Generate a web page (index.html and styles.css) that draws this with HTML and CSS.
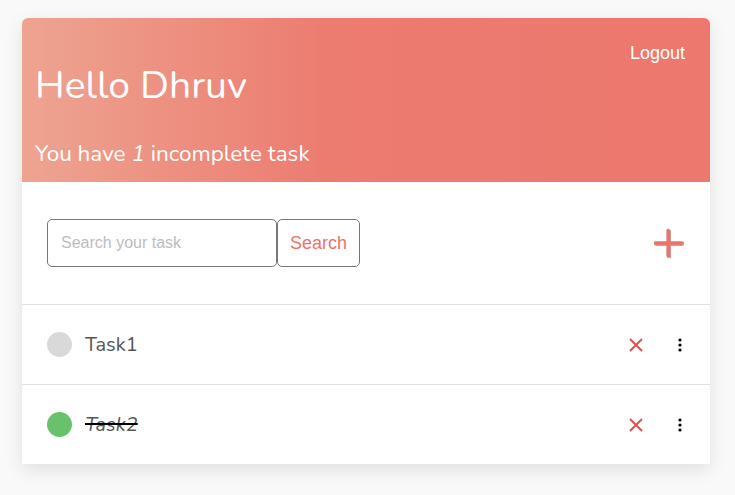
FILE: index.html
```html
<!DOCTYPE html>
<html>
<head>
<meta charset="utf-8">
<link rel="stylesheet" href="styles.css">
</head>
<body>
<div class="card">
  <header class="hero">
    <a class="logout" href="#">Logout</a>
    <h1 class="hello">Hello Dhruv</h1>
    <p class="summary">You have <em>1</em> incomplete task</p>
  </header>
  <div class="toolbar">
    <form class="search">
      <input class="search-input" type="text" placeholder="Search your task">
      <button class="search-btn" type="button">Search</button>
    </form>
    <button class="add-btn" type="button" aria-label="Add task">
      <svg width="30" height="30" viewBox="0 0 30 30">
        <g stroke="#a94a44" stroke-width="4" stroke-linecap="round" opacity="0.55">
          <line x1="15" y1="3.5" x2="15" y2="28.5"/>
          <line x1="2.5" y1="16" x2="28" y2="16"/>
        </g>
        <g stroke="#ec7369" stroke-width="3.6" stroke-linecap="round">
          <line x1="14.2" y1="2.5" x2="14.2" y2="27.5"/>
          <line x1="1.5" y1="15" x2="28" y2="15"/>
        </g>
      </svg>
    </button>
  </div>
  <ul class="tasks">
    <li class="task">
      <span class="dot"></span>
      <span class="task-name">Task1</span>
      <button class="icon-btn del" type="button" aria-label="Delete">
        <svg width="14" height="14" viewBox="0 0 14 14"><path d="M1 1 L13 13 M13 1 L1 13" stroke="#d9544c" stroke-width="2" fill="none"/></svg>
      </button>
      <button class="icon-btn more" type="button" aria-label="More">
        <svg width="4" height="14" viewBox="0 0 4 14"><circle cx="2" cy="2" r="1.6"/><circle cx="2" cy="7" r="1.6"/><circle cx="2" cy="12" r="1.6"/></svg>
      </button>
    </li>
    <li class="task done">
      <span class="dot"></span>
      <span class="task-name">Task2</span>
      <button class="icon-btn del" type="button" aria-label="Delete">
        <svg width="14" height="14" viewBox="0 0 14 14"><path d="M1 1 L13 13 M13 1 L1 13" stroke="#d9544c" stroke-width="2" fill="none"/></svg>
      </button>
      <button class="icon-btn more" type="button" aria-label="More">
        <svg width="4" height="14" viewBox="0 0 4 14"><circle cx="2" cy="2" r="1.6"/><circle cx="2" cy="7" r="1.6"/><circle cx="2" cy="12" r="1.6"/></svg>
      </button>
    </li>
  </ul>
</div>
</body>
</html>
```

FILE: styles.css
```css
* { box-sizing: border-box; }
html, body { margin: 0; padding: 0; }
html { background: #f9f9f9; }
body {
  font-family: "Nunito", "Lato", "Noto Sans", sans-serif;
  padding: 18px 25px 40px 22px;
}
.card {
  width: 688px;
  background: #fff;
  border-radius: 6px 6px 0 0;
  box-shadow: 0 6px 18px rgba(0,0,0,0.1);
}
.hero {
  height: 164px;
  border-radius: 6px 6px 0 0;
  background: linear-gradient(to right, #eea491 0%, #ec7b70 45%, #ec786e 100%);
  color: #fff;
  padding: 24px 25px 0 13px;
  display: flex;
  flex-direction: column;
}
.logout {
  align-self: flex-end;
  color: #fff;
  text-decoration: none;
  font-family: "Liberation Sans", Arial, sans-serif;
  font-size: 18px;
  line-height: 22px;
}
.hello {
  margin: -3px 0 0;
  font-weight: 400;
  font-size: 39px;
  line-height: 50px;
}
.summary {
  margin: 0;
  margin-top: 29px;
  font-size: 22.5px;
  line-height: 28px;
}
.summary em { font-style: italic; }
.toolbar {
  height: 122px;
  display: flex;
  align-items: center;
  justify-content: space-between;
  padding: 0 26px 0 25px;
}
.search { display: flex; margin: 0; }
.search-input {
  width: 230px;
  height: 48px;
  border: 1px solid #777;
  border-radius: 5px;
  padding: 0 13px;
  font-family: "Liberation Sans", Arial, sans-serif;
  font-size: 16px;
  color: #333;
}
.search-input::placeholder { color: #bdbdbd; }
.search-btn {
  height: 48px;
  width: 83px;
  background: #fff;
  border: 1px solid #777;
  border-radius: 5px;
  font-family: "Liberation Sans", Arial, sans-serif;
  font-size: 18px;
  color: #ec7369;
  padding: 0;
}
.add-btn {
  background: none;
  border: 0;
  padding: 0;
  width: 30px;
  height: 30px;
  display: flex;
}
.tasks { list-style: none; margin: 0; padding: 0; }
.task {
  height: 80px;
  border-top: 1px solid #dee2e6;
  display: flex;
  align-items: center;
  padding: 0 28px 0 25px;
}
.dot {
  width: 25px;
  height: 25px;
  border-radius: 50%;
  background: #d9d9d9;
  flex: none;
}
.done .dot { background: #69c26b; }
.task-name {
  margin-left: 13px;
  font-size: 20px;
  color: #555;
  flex: 1;
}
.done .task-name {
  font-style: italic;
  text-decoration: line-through;
  text-decoration-color: #000;
}
.icon-btn {
  background: none;
  border: 0;
  padding: 0;
  display: flex;
}
.del { margin-right: 35px; }
.more svg { fill: #000; }
```
